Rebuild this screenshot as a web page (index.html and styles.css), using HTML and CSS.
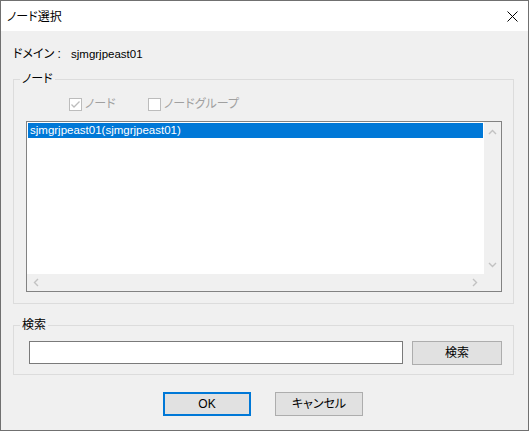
FILE: index.html
```html
<!DOCTYPE html>
<html lang="ja">
<head>
<meta charset="utf-8">
<title>ノード選択</title>
<link rel="stylesheet" href="styles.css">
</head>
<body>
<div class="window">
  <div class="titlebar">
    <span class="title">ノード選択</span>
    <svg class="close" width="11" height="11" viewBox="0 0 11 11"><path d="M0.5 0.5 L10.5 10.5 M10.5 0.5 L0.5 10.5" stroke="#000" stroke-width="1" fill="none"/></svg>
  </div>
  <div class="content">
    <div class="domain">
      <span class="dlabel">ドメイン :</span>
      <span class="dvalue latin">sjmgrjpeast01</span>
    </div>
    <fieldset class="group node-group">
      <legend>ノード</legend>
      <div class="checks">
        <label class="check first">
          <svg class="box" width="13" height="13" viewBox="0 0 13 13"><rect x="0.5" y="0.5" width="12" height="12" fill="#fff" stroke="#bcbcbc"/><path d="M2.5 6.5 L5 9 L10.5 3.5" stroke="#bcbcbc" stroke-width="1.3" fill="none"/></svg>
          <span>ノード</span>
        </label>
        <label class="check">
          <svg class="box" width="13" height="13" viewBox="0 0 13 13"><rect x="0.5" y="0.5" width="12" height="12" fill="#fff" stroke="#bcbcbc"/></svg>
          <span>ノードグループ</span>
        </label>
      </div>
      <div class="list">
        <div class="list-main">
          <div class="items">
            <div class="item selected latin">sjmgrjpeast01(sjmgrjpeast01)</div>
          </div>
          <div class="vscroll">
            <svg width="9" height="6" viewBox="0 0 9 6"><path d="M1 5 L4.5 1.5 L8 5" stroke="#c2c2c2" stroke-width="1.4" fill="none"/></svg>
            <svg width="9" height="6" viewBox="0 0 9 6"><path d="M1 1 L4.5 4.5 L8 1" stroke="#c2c2c2" stroke-width="1.4" fill="none"/></svg>
          </div>
        </div>
        <div class="hrow">
          <div class="hscroll">
            <svg width="6" height="9" viewBox="0 0 6 9"><path d="M5 1 L1.5 4.5 L5 8" stroke="#c2c2c2" stroke-width="1.4" fill="none"/></svg>
            <svg width="6" height="9" viewBox="0 0 6 9"><path d="M1 1 L4.5 4.5 L1 8" stroke="#c2c2c2" stroke-width="1.4" fill="none"/></svg>
          </div>
          <div class="corner"></div>
        </div>
      </div>
    </fieldset>
    <fieldset class="group search-group">
      <legend>検索</legend>
      <div class="search-row">
        <input class="search-input" type="text">
        <button class="btn search-btn">検索</button>
      </div>
    </fieldset>
    <div class="actions">
      <button class="btn default latin">OK</button>
      <button class="btn">キャンセル</button>
    </div>
  </div>
</div>
</body>
</html>
```

FILE: styles.css
```css
html, body {
  margin: 0;
  padding: 0;
  background: #f0f0f0;
}
body {
  font-family: "Liberation Sans", "Noto Sans CJK JP", sans-serif;
  font-size: 12px;
  line-height: 16px;
  color: #000;
  font-feature-settings: "palt";
}
.window {
  width: 529px;
  height: 431px;
  box-sizing: border-box;
  border: 1px solid #707070;
  background: #f0f0f0;
  display: flex;
  flex-direction: column;
}
.titlebar {
  height: 30px;
  background: #fff;
  display: flex;
  align-items: center;
  justify-content: space-between;
  padding: 0 10px 0 6px;
  flex: none;
}
.title {
  font-size: 12px;
  line-height: 16px;
  padding-top: 1px;
}
.close {
  display: block;
  margin-top: 1px;
}
.content {
  padding: 15px 0 0 12px;
  display: flex;
  flex-direction: column;
}
.domain {
  display: flex;
  height: 16px;
  align-items: center;
}
.dlabel {
  width: 58px;
}
.latin {
  font-size: 11.5px;
}
.group {
  margin: 0;
  padding: 0;
  border: 1px solid #dcdcdc;
  width: 501px;
  box-sizing: border-box;
  min-width: 0;
}
.group legend {
  padding: 0 2px;
  line-height: 16px;
}
.node-group {
  margin-top: 9px;
  padding: 0 11px 11px 12px;
}
.node-group legend {
  margin-left: -6px;
}
.checks {
  display: flex;
  padding: 9px 0 0 43px;
  height: 16px;
  align-items: center;
  color: #a0a0a0;
}
.check {
  display: flex;
  align-items: center;
  gap: 3px;
}
.check.first {
  width: 79px;
}
.box {
  display: block;
}
.list {
  margin-top: 9px;
  height: 171px;
  box-sizing: border-box;
  border: 1px solid #828282;
  background: #fff;
  display: flex;
  flex-direction: column;
}
.list-main {
  flex: 1;
  display: flex;
  min-height: 0;
}
.items {
  flex: 1;
  padding: 1px;
}
.item {
  height: 15px;
  line-height: 15px;
  padding-left: 2px;
}
.item.selected {
  background: #0078d7;
  color: #fff;
}
.vscroll {
  width: 17px;
  background: #f0f0f0;
  display: flex;
  flex-direction: column;
  justify-content: space-between;
  align-items: center;
  padding: 7px 0 6px;
  box-sizing: border-box;
}
.vscroll svg, .hscroll svg {
  display: block;
}
.hrow {
  height: 17px;
  display: flex;
  flex: none;
}
.hscroll {
  flex: 1;
  background: #f0f0f0;
  display: flex;
  justify-content: space-between;
  align-items: center;
  padding: 0 6px 0 6px;
}
.corner {
  width: 17px;
  background: #f0f0f0;
}
.search-group {
  margin-top: 13px;
  padding: 8px 11px 9px 15px;
}
.search-group legend {
  margin-left: -9px;
}
.search-row {
  display: flex;
  align-items: flex-start;
  gap: 9px;
}
.search-input {
  width: 374px;
  height: 23px;
  box-sizing: border-box;
  border: 1px solid #7a7a7a;
  background: #fff;
  margin: 0;
  padding: 0 3px;
  outline: none;
  font: inherit;
}
.btn {
  height: 24px;
  box-sizing: border-box;
  border: 1px solid #adadad;
  background: #e1e1e1;
  margin: 0;
  padding: 0;
  font-family: inherit;
  font-size: 12px;
  line-height: 16px;
  color: #000;
  font-feature-settings: "palt";
}
.search-btn {
  width: 90px;
}
.actions {
  margin-top: 17px;
  display: flex;
  justify-content: center;
  gap: 24px;
  padding-right: 15px;
}
.actions .btn {
  width: 88px;
}
.btn.default {
  border: 2px solid #0078d7;
}
```
